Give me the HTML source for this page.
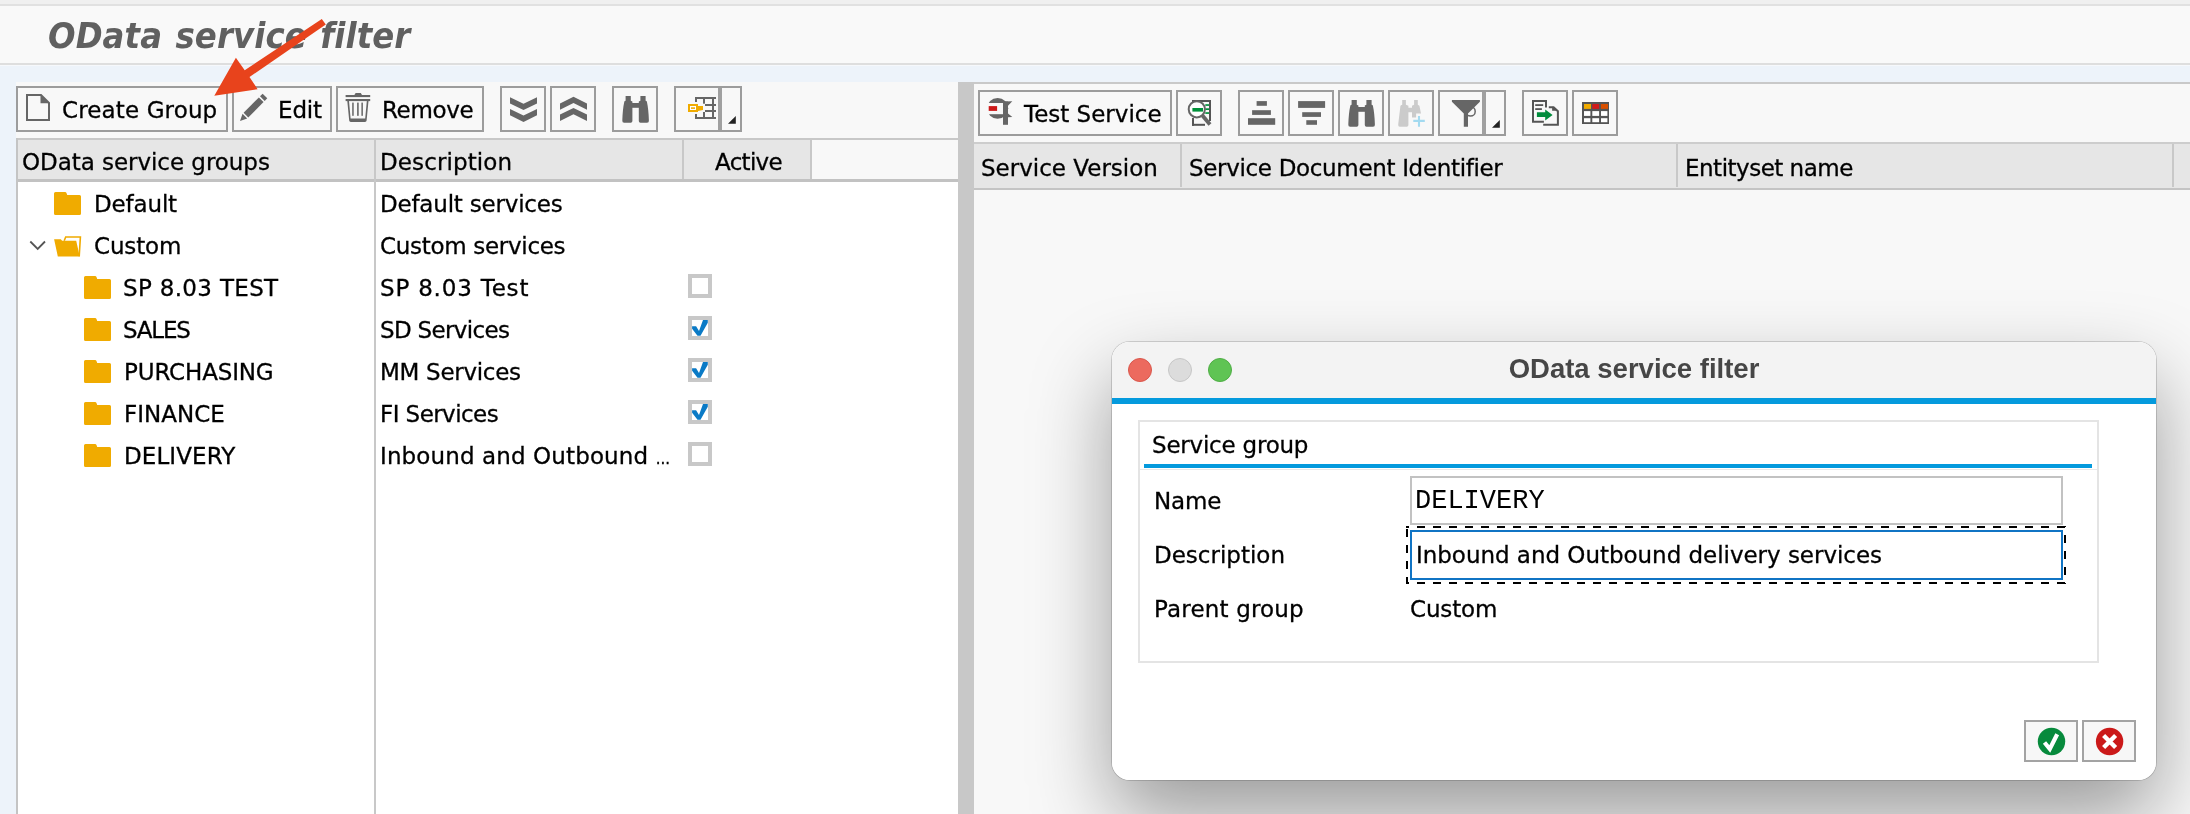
<!DOCTYPE html>
<html lang="en">
<head>
<meta charset="utf-8">
<title>OData service filter</title>
<style>
*{box-sizing:border-box;margin:0;padding:0}
html,body{width:2190px;height:814px;overflow:hidden;background:#edf3fa}
body{position:relative;font-family:"DejaVu Sans","Liberation Sans",sans-serif;font-size:23px;color:#000;letter-spacing:-.15px}
.abs{position:absolute}
.t{will-change:transform;-webkit-text-stroke:.3px #000;position:absolute;white-space:pre;line-height:26px;height:26px}
/* top area */
#top0{left:0;top:0;width:2190px;height:4px;background:#f0f0f0}
#top1{left:0;top:4px;width:2190px;height:2px;background:#e1e1e1}
#titlebar{left:0;top:6px;width:2190px;height:57px;background:#f9f9f9}
#top2{left:0;top:63px;width:2190px;height:2px;background:#dedede}
#top3{left:0;top:65px;width:2190px;height:1px;background:#f6f8fb}
#title{will-change:transform;left:48px;top:14px;font:italic bold 36px/44px "DejaVu Sans Condensed","DejaVu Sans","Liberation Sans",sans-serif;color:#606060;letter-spacing:.1px;word-spacing:2px;white-space:pre;font-stretch:condensed}
/* left pane */
#lpane{left:16px;top:82px;width:942px;height:732px;background:#f8f8f8}
#lhead{left:16px;top:138px;width:942px;height:44px;background:#f8f8f8;border-top:2px solid #c8c8c8;border-bottom:3px solid #c2c2c2}
#lheadfill{left:18px;top:140px;width:794px;height:39px;background:#e6e6e6}
#lbody{left:16px;top:182px;width:942px;height:632px;background:#fff}
#lborder{left:16px;top:138px;width:2px;height:676px;background:#c4c4c4}
.vsep{position:absolute;width:2px;background:#c8c8c8}
/* splitter */
#split{left:958px;top:82px;width:16px;height:732px;background:#c8c8c8}
/* right pane */
#rpane{left:974px;top:82px;width:1216px;height:732px;background:#f8f8f8;border-top:2px solid #c9c9c9}
#rhead{left:974px;top:142px;width:1216px;height:48px;background:#e6e6e6;border-top:2px solid #cdcdcd;border-bottom:2px solid #c4c4c4}
/* toolbar buttons */
.btn{position:absolute;height:46px;border:2px solid #9c9c9c;background:#f8f8f8}
.btn svg{position:absolute;overflow:visible}
.ddsep{position:absolute;top:0;width:4px;height:42px;background:#a0a0a0}
/* dialog */
#dlg{left:1112px;top:342px;width:1044px;height:438px;border-radius:18px;background:#fff;
 box-shadow:0 0 0 1px rgba(0,0,0,.15),0 36px 80px rgba(0,0,0,.38);overflow:visible}
#dlgin{left:0;top:0;width:1044px;height:438px;border-radius:18px;overflow:hidden;background:#fff}
#dtitle{left:0;top:0;width:1044px;height:56px;background:#f3f3f3}
#dblue{left:0;top:56px;width:1044px;height:6px;background:#049add}
.dot{position:absolute;top:16px;width:24px;height:24px;border-radius:50%}
#dtext{will-change:transform;left:0;top:11px;width:1044px;text-align:center;font:bold 27.5px/32px "Liberation Sans","DejaVu Sans",sans-serif;color:#464646;letter-spacing:0;white-space:pre}
#grp{left:26px;top:78px;width:961px;height:243px;border:2px solid #e4e4e4;background:#fff}
#grpblue{left:32px;top:122px;width:948px;height:4px;background:#049add}
#grpline{left:28px;top:127px;width:957px;height:1px;background:#e8e8e8}
#inName{left:298px;top:134px;width:653px;height:49px;border:2px solid #c2c2c2;background:#fff}
#inDesc{left:298px;top:188px;width:653px;height:50px;border:2px solid #1074c4;background:#fff}
.mono{-webkit-text-stroke:0;font-family:"Liberation Mono","DejaVu Sans Mono",monospace;font-size:27px;letter-spacing:0}
.dbtn{position:absolute;top:378px;width:54px;height:42px;border:2px solid #a3a3a3;background:#f7f7f7}
</style>
</head>
<body>
<!-- window header -->
<div class="abs" id="top0"></div><div class="abs" id="top1"></div>
<div class="abs" id="titlebar"></div><div class="abs" id="top2"></div><div class="abs" id="top3"></div>
<div class="abs" id="title">OData service filter</div>

<!-- left pane -->
<div class="abs" id="lpane"></div>
<div class="abs" id="lbody"></div>
<div class="abs" id="lhead"></div><div class="abs" id="lheadfill"></div>
<div class="abs" id="lborder"></div>
<div class="vsep" style="left:374px;top:140px;height:674px"></div>
<div class="vsep" style="left:682px;top:140px;height:39px"></div>
<div class="vsep" style="left:810px;top:140px;height:39px"></div>

<!-- left toolbar -->
<div id="ltb">
<div class="btn" style="left:16px;top:86px;width:212px"><span class="t" style="left:44px;top:9px;letter-spacing:0.13px">Create Group</span></div>
<div class="btn" style="left:232px;top:86px;width:100px"><span class="t" style="left:44px;top:9px">Edit</span></div>
<div class="btn" style="left:336px;top:86px;width:148px"><span class="t" style="left:44px;top:9px;letter-spacing:-0.35px">Remove</span></div>
<div class="btn" style="left:500px;top:86px;width:46px"></div>
<div class="btn" style="left:550px;top:86px;width:46px"></div>
<div class="btn" style="left:612px;top:86px;width:46px"></div>
<div class="btn" style="left:674px;top:86px;width:68px"><div class="ddsep" style="left:42px"></div></div>
</div>

<svg class="abs" id="licons" style="left:0;top:0" width="958" height="814" viewBox="0 0 958 814">
<path d="M27 95 H41 L49 103 V120 H27 Z" fill="none" stroke="#666" stroke-width="2"/><path d="M40.5 95 V103.2 H49 Z" fill="#666"/>
<g transform="translate(240 121) rotate(-45)" fill="#666"><path d="M0 0 L6.9 -3.3 V3.3 Z"/><rect x="8.4" y="-3.3" width="21.6" height="6.6"/><rect x="31.6" y="-3.3" width="3.7" height="6.6"/></g>
<g fill="#666"><path d="M354.4 95 L355.6 93.1 H360.8 L362 95 Z"/><rect x="345.6" y="95" width="24.6" height="2.1"/><rect x="345.6" y="99" width="24.6" height="2.1"/><path d="M347.3 101 H349 L350.6 118.6 H365.2 L366.8 101 H368.5 L366.6 120.6 Q366.5 122 365 122 H350.8 Q349.3 122 349.2 120.6 Z"/><rect x="352.2" y="102.6" width="1.5" height="13.2"/><rect x="357.1" y="102.6" width="1.6" height="13.2"/><rect x="361.4" y="102.6" width="1.5" height="13.2"/></g>
<g fill="#666"><path d="M510 97.2 L523.5 103.8 L537 97.2 V103.5 L523.5 110.1 L510 103.5 Z"/><path d="M510 109 L523.5 115.6 L537 109 V115.3 L523.5 121.9 L510 115.3 Z"/><path d="M560 109.7 L573.5 103.1 L587 109.7 V103.4 L573.5 96.8 L560 103.4 Z"/><path d="M560 120.9 L573.5 114.3 L587 120.9 V114.6 L573.5 108 L560 114.6 Z"/></g>
<path d="M625.6 96 H630.8 V100.7 L632.4 101.4 V121 Q632.4 122.8 630.7 122.8 H624.2 Q622.1 122.8 622.3 120.4 Q622.7 109 624.3 101.8 Q624.5 100.9 625.6 100.7 Z M645.6 96 H640.4 V100.7 L638.8 101.4 V121 Q638.8 122.8 640.5 122.8 H647 Q649.1 122.8 648.9 120.4 Q648.5 109 646.9 101.8 Q646.7 100.9 645.6 100.7 Z" fill="#666"/><rect x="632" y="103" width="7.2" height="4.8" fill="#666"/>
<g fill="#666"><rect x="695" y="97" width="21" height="2"/><rect x="695" y="117" width="21" height="2"/><rect x="695" y="97" width="2" height="5"/><rect x="695" y="114" width="2" height="5"/><rect x="703" y="97" width="2" height="6.7"/><rect x="703" y="112" width="2" height="7"/><rect x="712" y="97" width="2" height="22"/><rect x="705" y="104" width="11" height="2"/><rect x="705" y="110" width="11" height="2"/></g><path d="M688 104 H698 V106 H703 V110 L698 111 V112 H688 Z" fill="#f0ab00"/><rect x="690" y="106" width="6" height="4" fill="#fff"/><rect x="691" y="107.3" width="4" height="1.6" fill="#f0ab00"/>
<path d="M735.8 116 V123.8 H728 Z" fill="#222"/>
<path d="M55.5 192 H65 Q66.2 192 66.6 193.2 L67.2 195 H79.5 Q81 195 81 196.5 V213.5 Q81 215 79.5 215 H55.5 Q54 215 54 213.5 V193.5 Q54 192 55.5 192 Z" fill="#f0ab00"/>
<path d="M30.3 241.5 L37.7 249 L45 241.5" fill="none" stroke="#555" stroke-width="1.8"/>
<path d="M54.1 239.2 H60.8 L62.1 240.8 H76.2 L79.7 256.4 H57.8 Z" fill="#f0ab00"/><path d="M64.2 240.8 L65.7 237 H80.4 L79.2 256.4" fill="none" stroke="#f0ab00" stroke-width="1.6"/>
<path d="M85.5 276 H95 Q96.2 276 96.6 277.2 L97.2 279 H109.5 Q111 279 111 280.5 V297.5 Q111 299 109.5 299 H85.5 Q84 299 84 297.5 V277.5 Q84 276 85.5 276 Z" fill="#f0ab00"/>
<path d="M85.5 318 H95 Q96.2 318 96.6 319.2 L97.2 321 H109.5 Q111 321 111 322.5 V339.5 Q111 341 109.5 341 H85.5 Q84 341 84 339.5 V319.5 Q84 318 85.5 318 Z" fill="#f0ab00"/>
<path d="M85.5 360 H95 Q96.2 360 96.6 361.2 L97.2 363 H109.5 Q111 363 111 364.5 V381.5 Q111 383 109.5 383 H85.5 Q84 383 84 381.5 V361.5 Q84 360 85.5 360 Z" fill="#f0ab00"/>
<path d="M85.5 402 H95 Q96.2 402 96.6 403.2 L97.2 405 H109.5 Q111 405 111 406.5 V423.5 Q111 425 109.5 425 H85.5 Q84 425 84 423.5 V403.5 Q84 402 85.5 402 Z" fill="#f0ab00"/>
<path d="M85.5 444 H95 Q96.2 444 96.6 445.2 L97.2 447 H109.5 Q111 447 111 448.5 V465.5 Q111 467 109.5 467 H85.5 Q84 467 84 465.5 V445.5 Q84 444 85.5 444 Z" fill="#f0ab00"/>
<rect x="690" y="276" width="20" height="20" fill="#fff" stroke="#c8c8c8" stroke-width="4"/>
<rect x="690" y="318" width="20" height="20" fill="#fff" stroke="#c8c8c8" stroke-width="4"/>
<path d="M692.1 326.3 L696.1 326.3 L699 330.9 L703 320 L707.8 320 L707.8 322.8 L700.5 335.7 L697.5 335.7 L692.1 328.8 Z" fill="#0a7ac6"/>
<rect x="690" y="360" width="20" height="20" fill="#fff" stroke="#c8c8c8" stroke-width="4"/>
<path d="M692.1 368.3 L696.1 368.3 L699 372.9 L703 362 L707.8 362 L707.8 364.8 L700.5 377.7 L697.5 377.7 L692.1 370.8 Z" fill="#0a7ac6"/>
<rect x="690" y="402" width="20" height="20" fill="#fff" stroke="#c8c8c8" stroke-width="4"/>
<path d="M692.1 410.3 L696.1 410.3 L699 414.9 L703 404 L707.8 404 L707.8 406.8 L700.5 419.7 L697.5 419.7 L692.1 412.8 Z" fill="#0a7ac6"/>
<rect x="690" y="444" width="20" height="20" fill="#fff" stroke="#c8c8c8" stroke-width="4"/>
</svg>
<!-- left header text -->
<span class="t" style="left:22px;top:149px;letter-spacing:-0.05px">OData service groups</span>
<span class="t" style="left:380px;top:149px;letter-spacing:0.1px">Description</span>
<span class="t" style="left:715px;top:149px;letter-spacing:-0.7px">Active</span>

<!-- tree rows -->
<div id="rows">
<span class="t" style="left:94px;top:191px">Default</span><span class="t" style="left:380px;top:191px;letter-spacing:-0.2px">Default services</span>
<span class="t" style="left:94px;top:233px">Custom</span><span class="t" style="left:380px;top:233px;letter-spacing:-0.3px">Custom services</span>
<span class="t" style="left:123px;top:275px;letter-spacing:0.33px">SP 8.03 TEST</span><span class="t" style="left:380px;top:275px;letter-spacing:0.8px">SP 8.03 Test</span>
<span class="t" style="left:123px;top:317px;letter-spacing:-1.2px">SALES</span><span class="t" style="left:380px;top:317px;letter-spacing:-0.67px">SD Services</span>
<span class="t" style="left:124px;top:359px">PURCHASING</span><span class="t" style="left:380px;top:359px;letter-spacing:-0.3px">MM Services</span>
<span class="t" style="left:124px;top:401px;letter-spacing:0px">FINANCE</span><span class="t" style="left:380px;top:401px;letter-spacing:-0.57px">FI Services</span>
<span class="t" style="left:124px;top:443px;letter-spacing:0.1px">DELIVERY</span><span class="t" style="left:380px;top:443px;letter-spacing:0.12px">Inbound and Outbound <span style="font-size:15px;letter-spacing:0">...</span></span>
</div>

<!-- splitter + right pane -->
<div class="abs" id="split"></div>
<div class="abs" id="rpane"></div>
<div class="abs" id="rhead"></div>
<div class="vsep" style="left:1180px;top:144px;height:43px"></div>
<div class="vsep" style="left:1676px;top:144px;height:43px"></div>
<div class="vsep" style="left:2172px;top:144px;height:43px"></div>
<span class="t" style="left:981px;top:155px;letter-spacing:0px">Service Version</span>
<span class="t" style="left:1189px;top:155px;letter-spacing:-0.33px">Service Document Identifier</span>
<span class="t" style="left:1685px;top:155px;letter-spacing:-0.5px">Entityset name</span>

<!-- right toolbar -->
<div id="rtb">
<div class="btn" style="left:978px;top:90px;width:194px"><span class="t" style="left:44px;top:9px;letter-spacing:0px">Test Service</span></div>
<div class="btn" style="left:1176px;top:90px;width:46px"></div>
<div class="btn" style="left:1238px;top:90px;width:46px"></div>
<div class="btn" style="left:1288px;top:90px;width:46px"></div>
<div class="btn" style="left:1338px;top:90px;width:46px"></div>
<div class="btn" style="left:1388px;top:90px;width:46px"></div>
<div class="btn" style="left:1438px;top:90px;width:68px"><div class="ddsep" style="left:42px"></div></div>
<div class="btn" style="left:1522px;top:90px;width:46px"></div>
<div class="btn" style="left:1572px;top:90px;width:46px"></div>
</div>

<svg class="abs" id="ricons" style="left:974px;top:0" width="1216" height="200" viewBox="974 0 1216 200">
<ellipse cx="997.6" cy="108.35" rx="10.6" ry="10.45" fill="#666"/><rect x="985" y="103" width="18.2" height="11.2" fill="#f8f8f8"/><rect x="1003" y="101.5" width="5" height="23.3" fill="#666"/><path d="M1004 101.5 L1012.3 101.3 L1008 105.8 Z M1008 113.6 L1012.3 117 L1008 117.3 Z" fill="#666"/><rect x="988.7" y="106.1" width="8.4" height="4.8" fill="#cc1818"/>
<g fill="#555"><rect x="1192" y="100" width="19" height="2"/><rect x="1209" y="100" width="2" height="21"/><rect x="1192" y="118" width="2" height="7.8"/><rect x="1192" y="123.8" width="13" height="2"/></g><g fill="#00913a"><rect x="1205.3" y="104.2" width="3.7" height="1.7"/><rect x="1205.3" y="108.3" width="3.7" height="1.7"/><rect x="1205.3" y="112.2" width="3.7" height="1.7"/></g><path d="M1202.4 115.6 L1210 124.6" stroke="#666" stroke-width="3.8" fill="none"/><circle cx="1196.8" cy="109.3" r="8.1" fill="#fff" stroke="#666" stroke-width="2"/><rect x="1192.4" y="108" width="10.6" height="3.6" fill="#00913a"/>
<g fill="#666"><rect x="1256.6" y="101.1" width="10.3" height="4.7"/><rect x="1252.1" y="110.2" width="18.8" height="4.7"/><rect x="1248" y="118.2" width="27.2" height="6.6"/><rect x="1298.1" y="101.1" width="27" height="6.8"/><rect x="1302.2" y="112.2" width="18.8" height="4.7"/><rect x="1306.3" y="120.2" width="10.7" height="4.6"/></g>
<path d="M1351.6 100 H1356.8 V104.7 L1358.4 105.4 V125 Q1358.4 126.8 1356.7 126.8 H1350.2 Q1348.1 126.8 1348.3 124.4 Q1348.7 113 1350.3 105.8 Q1350.5 104.9 1351.6 104.7 Z M1371.6 100 H1366.4 V104.7 L1364.8 105.4 V125 Q1364.8 126.8 1366.5 126.8 H1373 Q1375.1 126.8 1374.9 124.4 Q1374.5 113 1372.9 105.8 Q1372.7 104.9 1371.6 104.7 Z" fill="#666"/><rect x="1358" y="107" width="7.2" height="4.8" fill="#666"/>
<path d="M1402.2 100 H1405.9 V104.7 L1408.4 105.8 V125 Q1408.4 126.8 1406.7 126.8 H1399.9 Q1398.0 126.8 1398.2 124.6 L1400.4 106 Q1400.6 104.9 1402.2 104.7 Z M1408.1 107.8 H1412.3 V112.3 H1408.1 Z M1414.1 100 H1417.8 V104.7 L1419.4 105.8 L1421.0 113.4 H1416.1 V117.6 H1412.0 V105.8 L1414.1 104.7 Z" fill="#cbcbcb"/><path d="M1413.3 120.9 H1424.8 M1419 116 V126.8" stroke="#a3daf0" stroke-width="2.1" fill="none"/>
<circle cx="1470.6" cy="111.4" r="4.6" fill="none" stroke="#666" stroke-width="1.5"/><path d="M1451.9 100 H1479.9 V101.8 L1468 113.6 V126.8 H1463.8 V113.6 L1451.9 101.8 Z" fill="#666"/>
<path d="M1499.8 120 V127.8 H1492 Z" fill="#222"/>
<g fill="none" stroke="#555" stroke-width="2"><path d="M1546 107.6 V101 H1533 V121.8 H1543.9"/><path d="M1548.8 107.2 H1553.6 L1557.9 111.2 V124.8 H1543.2"/></g><path d="M1552.1 106.6 V110.8 H1557.2 Z" fill="#555"/><g fill="#555"><rect x="1535.2" y="104.2" width="8" height="1.8"/><rect x="1535.2" y="108.2" width="6.7" height="1.8"/></g><path d="M1536.9 112.2 H1545.2 V109.4 L1552.6 114.9 L1545.2 120.6 V117 H1536.9 Z" fill="#008c3c"/>
<rect x="1582" y="102" width="27" height="22" fill="#555"/><rect x="1584" y="104" width="7" height="4.9" fill="#f0ab00"/><rect x="1592.3" y="104" width="6.8" height="4.9" fill="#d01a1a"/><rect x="1600.9" y="104" width="7.1" height="4.9" fill="#d95000"/><rect x="1584" y="111.1" width="6.4" height="4.8" fill="#fff"/><rect x="1592.3" y="111.1" width="6.8" height="4.8" fill="#fff"/><rect x="1601" y="111.1" width="6.4" height="4.8" fill="#fff"/><rect x="1584" y="118.2" width="6.4" height="4" fill="#fff"/><rect x="1592.3" y="118.2" width="6.8" height="4" fill="#fff"/><rect x="1601" y="118.2" width="6.4" height="4" fill="#fff"/>
</svg>
<!-- dialog -->
<div class="abs" id="dlg">
 <div class="abs" id="dlgin">
  <div class="abs" id="dtitle"></div>
  <div class="dot" style="left:16px;background:#ec6a5e;border:1px solid #d9574c"></div>
  <div class="dot" style="left:56px;background:#dcdcdc;border:1px solid #c6c6c6"></div>
  <div class="dot" style="left:96px;background:#5fc454;border:1px solid #4fad45"></div>
  <div class="abs" id="dtext">OData service filter</div>
  <div class="abs" id="dblue"></div>
  <div class="abs" id="grp"></div>
  <div class="abs" id="grpblue"></div><div class="abs" id="grpline"></div>
  <span class="t" style="left:40px;top:90px;letter-spacing:-0.22px">Service group</span>
  <span class="t" style="left:42px;top:146px">Name</span>
  <span class="t" style="left:42px;top:200px;letter-spacing:0px">Description</span>
  <span class="t" style="left:42px;top:254px;letter-spacing:0.17px">Parent group</span>
  <div class="abs" id="inName"></div>
  <span class="t mono" style="left:303px;top:146px">DELIVERY</span>
  <svg class="abs" id="inDescDash" style="left:294px;top:184px" width="660" height="58" viewBox="294 184 660 58"><g stroke="#000" stroke-width="2" stroke-dasharray="8 8" fill="none"><path d="M294 185 H954" stroke-dashoffset="5"/><path d="M294 241 H954" stroke-dashoffset="5"/><path d="M295 184 V242" stroke-dashoffset="13"/><path d="M953 184 V242" stroke-dashoffset="7"/></g></svg>
  <div class="abs" id="inDesc"></div>
  <span class="t" style="left:304px;top:200px;letter-spacing:-0.03px">Inbound and Outbound delivery services</span>
  <span class="t" style="left:298px;top:254px">Custom</span>
  <div class="dbtn" style="left:912px"></div>
  <div class="dbtn" style="left:970px"></div>
  <svg class="abs" style="left:912px;top:378px" width="112" height="42" viewBox="0 0 112 42"><circle cx="27.5" cy="21.5" r="13.7" fill="#078a3c"/><path d="M20.5 22.5 L25.8 29 L33.2 14.2" fill="none" stroke="#fff" stroke-width="4.2"/><circle cx="85.6" cy="21.5" r="13.7" fill="#cb1919"/><path d="M79.6 15.5 L91.6 27.5 M91.6 15.5 L79.6 27.5" fill="none" stroke="#fff" stroke-width="4.4"/></svg>
 </div>
</div>

<!-- red annotation arrow -->
<svg class="abs" id="arrow" style="left:0;top:0" width="420" height="140" viewBox="0 0 420 140">
 <path d="M321.8 18.9 L325.8 24.6 L249.5 77 L257.6 89.2 L214.3 95.7 L235.9 57.8 L244.7 70.3 Z" fill="#e8431c"/>
</svg>
</body>
</html>
